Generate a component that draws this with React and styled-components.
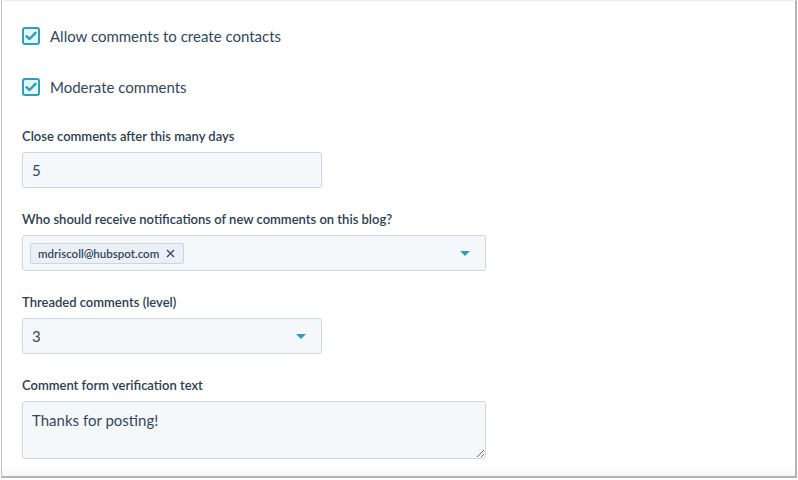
import React from 'react'
import styled, { createGlobalStyle } from 'styled-components'

const GlobalStyle = createGlobalStyle`
  html, body {
    margin: 0;
    padding: 0;
    background: #ffffff;
  }

  body {
    font-family: Lato, "Open Sans", "Liberation Sans", sans-serif;
    color: #33475b;
  }
`

const Frame = styled.div`
  box-sizing: border-box;
  width: 796px;
  height: 478px;
  margin-left: 1px;
  border-top: 1px solid #ececec;
  border-left: 1px solid #c4c4c4;
  border-right: 2px solid #b4b4b4;
  border-bottom: 2px solid #b4b4b4;
  background: linear-gradient(to bottom, #ffffff 0, #ffffff 462px, #f8f8f8 475px);
  padding: 26px 0 0 20px;
  display: flex;
  flex-direction: column;
`

const CheckRow = styled.label`
  display: flex;
  align-items: center;
  gap: 10px;
  height: 18px;
  margin-bottom: ${(p) => p.$gap || 0}px;
  font-size: 15px;
  color: #33475b;
  cursor: pointer;
`

const CheckBox = styled.span`
  box-sizing: border-box;
  width: 18px;
  height: 18px;
  border: 2px solid #2e9fb6;
  border-radius: 3px;
  background: #e5f5f8;
  display: flex;
  align-items: center;
  justify-content: center;
`

const Field = styled.div`
  display: flex;
  flex-direction: column;
  margin-bottom: ${(p) => p.$gap || 0}px;
`

const Label = styled.div`
  font-size: 13px;
  font-weight: 600;
  line-height: 18px;
  color: #2d3e50;
  margin-bottom: 7px;
`

const TextInput = styled.input`
  box-sizing: border-box;
  width: ${(p) => p.$width}px;
  height: 36px;
  padding: 0 9px;
  border: 1px solid #cbd6e2;
  border-radius: 3px;
  background: #f5f8fa;
  font-family: inherit;
  font-size: 15px;
  color: #33475b;
  outline: none;
`

const SelectBox = styled.div`
  box-sizing: border-box;
  width: ${(p) => p.$width}px;
  height: 36px;
  padding: 0 15px 0 ${(p) => (p.$tags ? 7 : 9)}px;
  border: 1px solid #cbd6e2;
  border-radius: 3px;
  background: #f5f8fa;
  display: flex;
  align-items: center;
  justify-content: space-between;
  font-size: 15px;
  color: #33475b;
`

const Tag = styled.span`
  box-sizing: border-box;
  height: 21px;
  padding: 0 8px 0 7px;
  display: inline-flex;
  align-items: center;
  gap: 7px;
  border: 1px solid #cbd6e2;
  border-radius: 2px;
  background: #eaf0f6;
  font-size: 11.5px;
  font-weight: 600;
  color: #33475b;
`

const Caret = styled.span`
  width: 0;
  height: 0;
  border-left: 5.5px solid transparent;
  border-right: 5.5px solid transparent;
  border-top: 5px solid #2e9fb6;
`

const TextArea = styled.textarea`
  box-sizing: border-box;
  width: 464px;
  height: 58px;
  padding: 9px 9px;
  border: 1px solid #cbd6e2;
  border-radius: 3px;
  background: #f5f8fa;
  font-family: inherit;
  font-size: 15px;
  color: #33475b;
  outline: none;
  resize: both;
`

const CheckMark = () => (
  <svg width="12" height="10" viewBox="0 0 12 10">
    <path d="M1.5 5.2 L4.5 8 L10.5 1.8" fill="none" stroke="#2e9fb6" strokeWidth="2.4" strokeLinecap="round" strokeLinejoin="round" />
  </svg>
)

const CloseIcon = () => (
  <svg width="9" height="9" viewBox="0 0 9 9">
    <path d="M1 1 L8 8 M8 1 L1 8" stroke="#33475b" strokeWidth="1.3" />
  </svg>
)

const App = () => {
  return (
    <>
      <GlobalStyle />
      <Frame>
        <CheckRow $gap={33}>
          <CheckBox><CheckMark /></CheckBox>
          Allow comments to create contacts
        </CheckRow>
        <CheckRow $gap={31}>
          <CheckBox><CheckMark /></CheckBox>
          Moderate comments
        </CheckRow>

        <Field $gap={22}>
          <Label>Close comments after this many days</Label>
          <TextInput $width={300} defaultValue="5" />
        </Field>

        <Field $gap={22}>
          <Label>Who should receive notifications of new comments on this blog?</Label>
          <SelectBox $width={464} $tags>
            <Tag>
              mdriscoll@hubspot.com
              <CloseIcon />
            </Tag>
            <Caret />
          </SelectBox>
        </Field>

        <Field $gap={22}>
          <Label>Threaded comments (level)</Label>
          <SelectBox $width={300}>
            3
            <Caret />
          </SelectBox>
        </Field>

        <Field>
          <Label>Comment form verification text</Label>
          <TextArea defaultValue="Thanks for posting!" />
        </Field>
      </Frame>
    </>
  )
}

export default App
